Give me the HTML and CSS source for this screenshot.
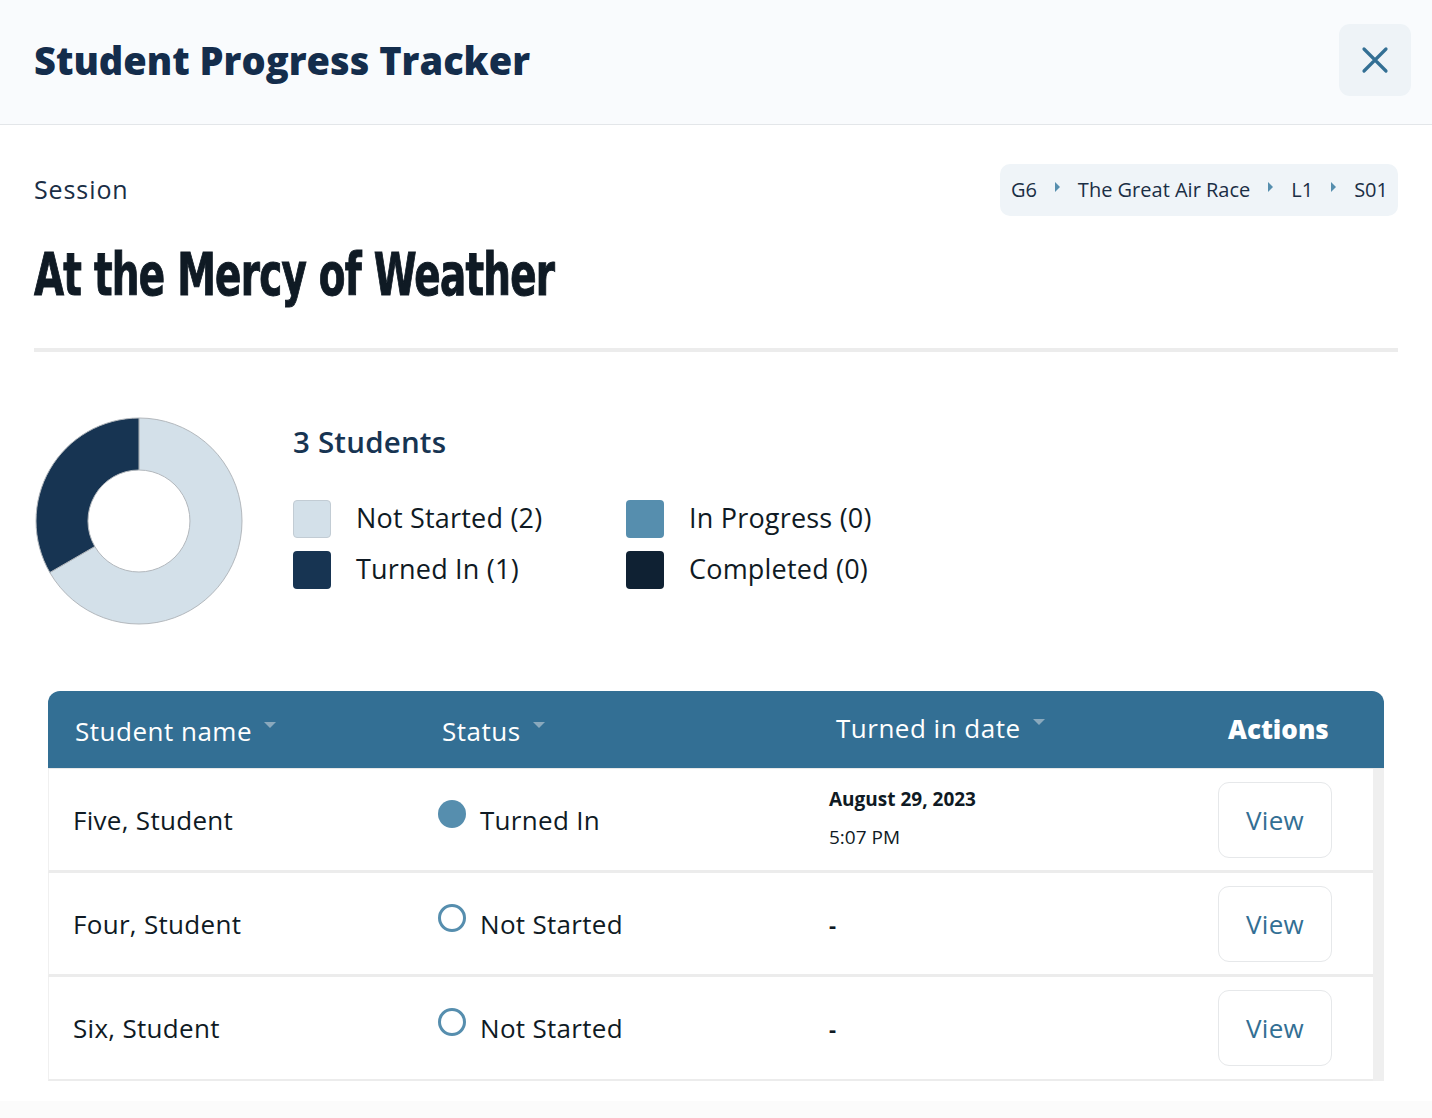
FILE: index.html
```html
<!DOCTYPE html>
<html lang="en">
<head>
<meta charset="utf-8">
<title>Student Progress Tracker</title>
<link rel="stylesheet" href="styles.css">
</head>
<body>
<header class="topbar">
  <h1 class="app-title">Student Progress Tracker</h1>
  <button class="close-btn" aria-label="Close">
    <svg width="28" height="28" viewBox="0 0 28 28"><path d="M3 3 L25 25 M25 3 L3 25" stroke="#336f94" stroke-width="3.2" stroke-linecap="round" fill="none"/></svg>
  </button>
</header>
<main class="content">
  <div class="session-row">
    <span class="session-label">Session</span>
    <nav class="crumbs">
      <span>G6</span><span class="caret"></span>
      <span>The Great Air Race</span><span class="caret"></span>
      <span>L1</span><span class="caret"></span>
      <span>S01</span>
    </nav>
  </div>
  <div class="headline-wrap"><h2 class="headline">At the Mercy of Weather</h2></div>
  <hr class="divider">
  <section class="summary">
    <svg class="donut" width="210" height="210" viewBox="0 0 210 210">
      <path d="M105 2 A103 103 0 1 1 15.8 156.5 L60.8 130.5 A51 51 0 1 0 105 54 Z" fill="#d3e0e9" stroke="#b3b8bd" stroke-width="1"/>
      <path d="M105 2 A103 103 0 0 0 15.8 156.5 L60.8 130.5 A51 51 0 0 1 105 54 Z" fill="#173452" stroke="#b3b8bd" stroke-width="1"/>
    </svg>
    <div class="legend">
      <div class="count">3 Students</div>
      <div class="legend-grid">
        <div class="legend-item"><span class="swatch sw-ns"></span>Not Started (2)</div>
        <div class="legend-item"><span class="swatch sw-ip"></span>In Progress (0)</div>
        <div class="legend-item"><span class="swatch sw-ti"></span>Turned In (1)</div>
        <div class="legend-item"><span class="swatch sw-co"></span>Completed (0)</div>
      </div>
    </div>
  </section>
  <section class="table">
    <div class="thead">
      <div class="th">Student name<span class="sort"></span></div>
      <div class="th">Status<span class="sort"></span></div>
      <div class="th th-date">Turned in date<span class="sort"></span></div>
      <div class="th th-actions">Actions</div>
    </div>
    <div class="tbody-wrap">
      <div class="tbody">
        <div class="tr">
          <div class="td">Five, Student</div>
          <div class="td status"><span class="dot dot-filled"></span>Turned In</div>
          <div class="td date"><strong>August 29, 2023</strong><span>5:07 PM</span></div>
          <div class="td actions"><button class="view-btn">View</button></div>
        </div>
        <div class="tr">
          <div class="td">Four, Student</div>
          <div class="td status"><span class="dot dot-ring"></span>Not Started</div>
          <div class="td dash">-</div>
          <div class="td actions"><button class="view-btn">View</button></div>
        </div>
        <div class="tr">
          <div class="td">Six, Student</div>
          <div class="td status"><span class="dot dot-ring"></span>Not Started</div>
          <div class="td dash">-</div>
          <div class="td actions"><button class="view-btn">View</button></div>
        </div>
      </div>
      <div class="scroll-track"></div>
    </div>
  </section>
</main>
<div class="footer-band"></div>
</body>
</html>
```
FILE: styles.css
```css
* { box-sizing: border-box; }
html, body { margin: 0; padding: 0; }
body {
  font-family: "Open Sans", "Noto Sans", sans-serif;
  color: #0f1a24;
  background: #ffffff;
  width: 1432px;
}
.topbar {
  height: 125px;
  background: #f9fbfd;
  border-bottom: 1px solid #e3e6e9;
  display: flex;
  align-items: center;
  justify-content: space-between;
  padding: 0 21px 0 34px;
}
.app-title {
  margin: 0;
  font-size: 38px;
  font-weight: 800;
  color: #142d4c;
  letter-spacing: 0px;
  margin-top: -4px;
}
.close-btn {
  width: 72px;
  height: 72px;
  border: none;
  border-radius: 11px;
  background: #eef3f7;
  display: flex;
  align-items: center;
  justify-content: center;
  padding: 0;
  margin-top: -4px;
}
.content { padding: 0 34px; }
.session-row {
  display: flex;
  justify-content: space-between;
  align-items: center;
  margin-top: 39px;
  height: 52px;
}
.session-label {
  font-size: 25px;
  color: #1a2e45;
  letter-spacing: 0.9px;
  margin-top: -3px;
}
.crumbs {
  height: 52px;
  background: #eff4f8;
  border-radius: 10px;
  display: flex;
  align-items: center;
  gap: 18px;
  padding: 0 10px 0 11px;
  font-size: 20px;
  color: #1a2e45;
}
.crumbs span:not(.caret) { margin-top: -2px; }
.caret {
  width: 0; height: 0;
  border-top: 5px solid transparent;
  border-bottom: 5px solid transparent;
  border-left: 5px solid #568eae;
  margin-top: -6px;
}
.headline-wrap { height: 91px; margin-top: 26px; overflow: visible; }
.headline {
  margin: 0;
  font-family: "DejaVu Sans", sans-serif;
  font-stretch: condensed;
  font-weight: 700;
  font-size: 58px;
  line-height: 66px;
  color: #0f1a24;
  transform: scaleX(0.745);
  transform-origin: left center;
  white-space: nowrap;
  letter-spacing: -1px;
  -webkit-text-stroke: 1px #0f1a24;
}
.divider {
  margin: 15px 0 0;
  border: none;
  height: 4px;
  background: #ececec;
}
.summary {
  display: flex;
  align-items: flex-start;
  margin-top: 64px;
  gap: 49px;
}
.donut { display: block; margin-left: 0; }
.legend { padding-top: 8px; }
.count {
  font-size: 29.5px;
  font-weight: 600;
  color: #173452;
  line-height: 36px;
  letter-spacing: 0.2px;
}
.legend-grid {
  display: grid;
  grid-template-columns: 333px auto;
  row-gap: 13px;
  margin-top: 38px;
}
.legend-item {
  display: flex;
  align-items: center;
  gap: 25px;
  font-size: 27px;
  color: #0f1a24;
  height: 38px;
  letter-spacing: 0.2px;
}
.swatch {
  width: 38px; height: 38px;
  border-radius: 4px;
  display: inline-block;
  margin-top: 3px;
}
.sw-ns { background: #d3e0e9; border: 1px solid #c2ccd4; }
.sw-ip { background: #568eae; }
.sw-ti { background: #173452; }
.sw-co { background: #0f2133; }
.table {
  margin: 65px 14px 0;
}
.thead {
  height: 77px;
  background: #336f94;
  border-radius: 12px 12px 0 0;
  display: grid;
  grid-template-columns: 367px 393px 382px 194px;
  align-items: center;
  color: #ffffff;
  font-size: 26px;
}
.th {
  padding-left: 27px;
  display: flex;
  align-items: center;
  gap: 12px;
  padding-top: 2px;
  letter-spacing: 0.5px;
}
.th-date { padding-left: 28px; padding-top: 0; margin-top: -3px; }
.th-actions {
  font-weight: 800;
  justify-content: flex-start;
  padding-left: 38px;
  margin-top: -3px;
  letter-spacing: 0;
}
.sort {
  width: 0; height: 0;
  border-left: 6px solid transparent;
  border-right: 6px solid transparent;
  border-top: 6px solid #8aa9bd;
  margin-top: -12px;
}
.tbody-wrap {
  display: flex;
  border-top: 1px solid #e8e8e8;
}
.tbody { flex: 1; }
.scroll-track { width: 12px; background: #efefef; }
.tr {
  height: 104px;
  display: grid;
  grid-template-columns: 367px 393px 382px 182px;
  align-items: center;
  border-bottom: 3px solid #ececec;
  border-left: 1px solid #f0f0f0;
  font-size: 26px;
  color: #0f1a24;
}
.tr:last-child { border-bottom: 2px solid #ececec; }
.td { padding-left: 24px; letter-spacing: 0.3px; }
.status {
  display: flex;
  align-items: center;
  gap: 14px;
  padding-left: 22px;
}
.dot {
  width: 28px; height: 28px;
  border-radius: 50%;
  display: inline-block;
  margin-top: -12px;
  flex: none;
}
.dot-filled { background: #568eae; }
.dot-ring { border: 3px solid #568eae; }
.date {
  display: flex;
  flex-direction: column;
  gap: 12px;
  font-size: 19px;
  padding-left: 20px;
  margin-top: -4px;
  letter-spacing: 0;
}
.date strong { font-weight: 700; }
.dash { padding-left: 20px; font-size: 22px; font-weight: 700; }
.actions { padding-left: 27px; }
.view-btn {
  width: 114px;
  height: 76px;
  background: #ffffff;
  border: 1px solid #e6e8ea;
  border-radius: 11px;
  font-family: inherit;
  font-size: 26px;
  color: #336f94;
  padding: 0;
  letter-spacing: 0.3px;
}
.footer-band { height: 40px; background: #fbfbfb; margin-top: 20px; }
```
